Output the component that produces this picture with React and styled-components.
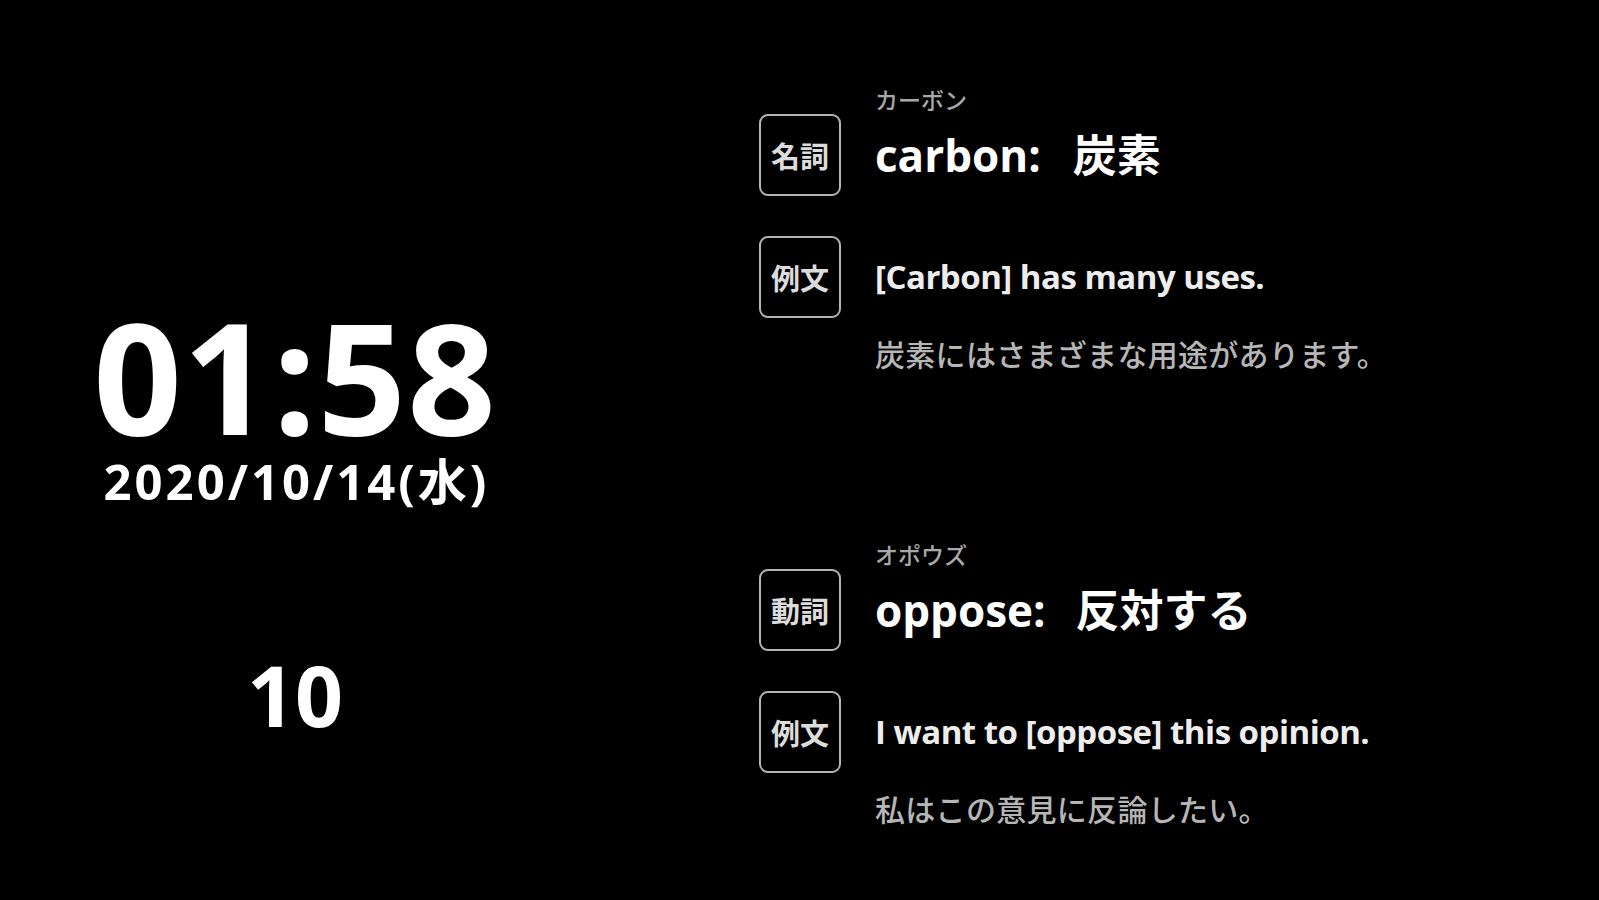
import React from "react";
import styled, { createGlobalStyle } from "styled-components";

const GlobalStyle = createGlobalStyle`
  html, body {
    margin: 0;
    padding: 0;
    background: #000;
    width: 100%;
    height: 100%;
  }
  body {
    font-family: "Open Sans", "Noto Sans CJK JP", sans-serif;
    color: #fff;
  }
  #root {
    min-height: 100vh;
  }
`;

const Screen = styled.div`
  display: grid;
  grid-template-columns: 590px 1fr;
  width: 1599px;
  height: 900px;
  background: #000;
  overflow: hidden;
`;

const ClockColumn = styled.section`
  display: flex;
  flex-direction: column;
  align-items: center;
  padding-top: 302px;
`;

const Time = styled.div`
  font-size: 155px;
  line-height: 146px;
  font-weight: 700;
  color: #fff;
  letter-spacing: 1px;
`;

const DateText = styled.div`
  margin-top: 9px;
  font-size: 49px;
  line-height: 49px;
  font-weight: 700;
  color: #fff;
  letter-spacing: 3px;
  margin-right: -3px;
`;

const Counter = styled.div`
  margin-top: 147px;
  font-size: 84px;
  line-height: 84px;
  font-weight: 700;
  color: #fff;
`;

const WordColumn = styled.section`
  display: flex;
  flex-direction: column;
  gap: 172px;
  padding-top: 88px;
  padding-left: 169px;
`;

const Entry = styled.article`
  display: flex;
  flex-direction: column;
`;

const Reading = styled.div`
  margin-left: 116px;
  font-size: 23px;
  line-height: 24px;
  height: 24px;
  color: #a8a8a8;
  font-weight: 500;
`;

const Row = styled.div`
  display: flex;
  align-items: center;
  gap: 34px;
  margin-top: ${(p) => p.$gap}px;
`;

const Badge = styled.div`
  box-sizing: border-box;
  width: 82px;
  height: 82px;
  border: 2px solid #b4b4b4;
  border-radius: 9px;
  display: flex;
  align-items: center;
  justify-content: center;
  font-family: "Noto Sans CJK JP", sans-serif;
  font-size: 29px;
  font-weight: 700;
  color: #dcdcdc;
`;

const Headword = styled.div`
  font-size: 44px;
  line-height: 50px;
  font-weight: 700;
  color: #fff;
  white-space: nowrap;
`;

const Meaning = styled.span`
  margin-left: ${(p) => p.$space}px;
`;

const Sentence = styled.div`
  font-size: 33px;
  line-height: 40px;
  font-weight: 700;
  color: #ededed;
  white-space: nowrap;
  letter-spacing: -0.5px;
`;

const Translation = styled.div`
  margin-left: 116px;
  margin-top: 21px;
  font-size: 30px;
  line-height: 32px;
  font-weight: 500;
  color: #b6b6b6;
  white-space: nowrap;
  letter-spacing: 0.3px;
`;

const entries = [
  {
    reading: "カーボン",
    pos: "名詞",
    word: "carbon:",
    meaning: "炭素",
    example: "[Carbon] has many uses.",
    translation: "炭素にはさまざまな用途があります。",
    space: 32,
  },
  {
    reading: "オポウズ",
    pos: "動詞",
    word: "oppose:",
    meaning: "反対する",
    example: "I want to [oppose] this opinion.",
    translation: "私はこの意見に反論したい。",
    space: 30,
  },
];

export default function App() {
  return (
    <>
      <GlobalStyle />
      <Screen>
        <ClockColumn>
          <Time>01:58</Time>
          <DateText>2020/10/14(水)</DateText>
          <Counter>10</Counter>
        </ClockColumn>
        <WordColumn>
          {entries.map((e) => (
            <Entry key={e.word}>
              <Reading>{e.reading}</Reading>
              <Row $gap={2}>
                <Badge>{e.pos}</Badge>
                <Headword>
                  {e.word}
                  <Meaning $space={e.space}>{e.meaning}</Meaning>
                </Headword>
              </Row>
              <Row $gap={40}>
                <Badge>例文</Badge>
                <Sentence>{e.example}</Sentence>
              </Row>
              <Translation>{e.translation}</Translation>
            </Entry>
          ))}
        </WordColumn>
      </Screen>
    </>
  );
}
